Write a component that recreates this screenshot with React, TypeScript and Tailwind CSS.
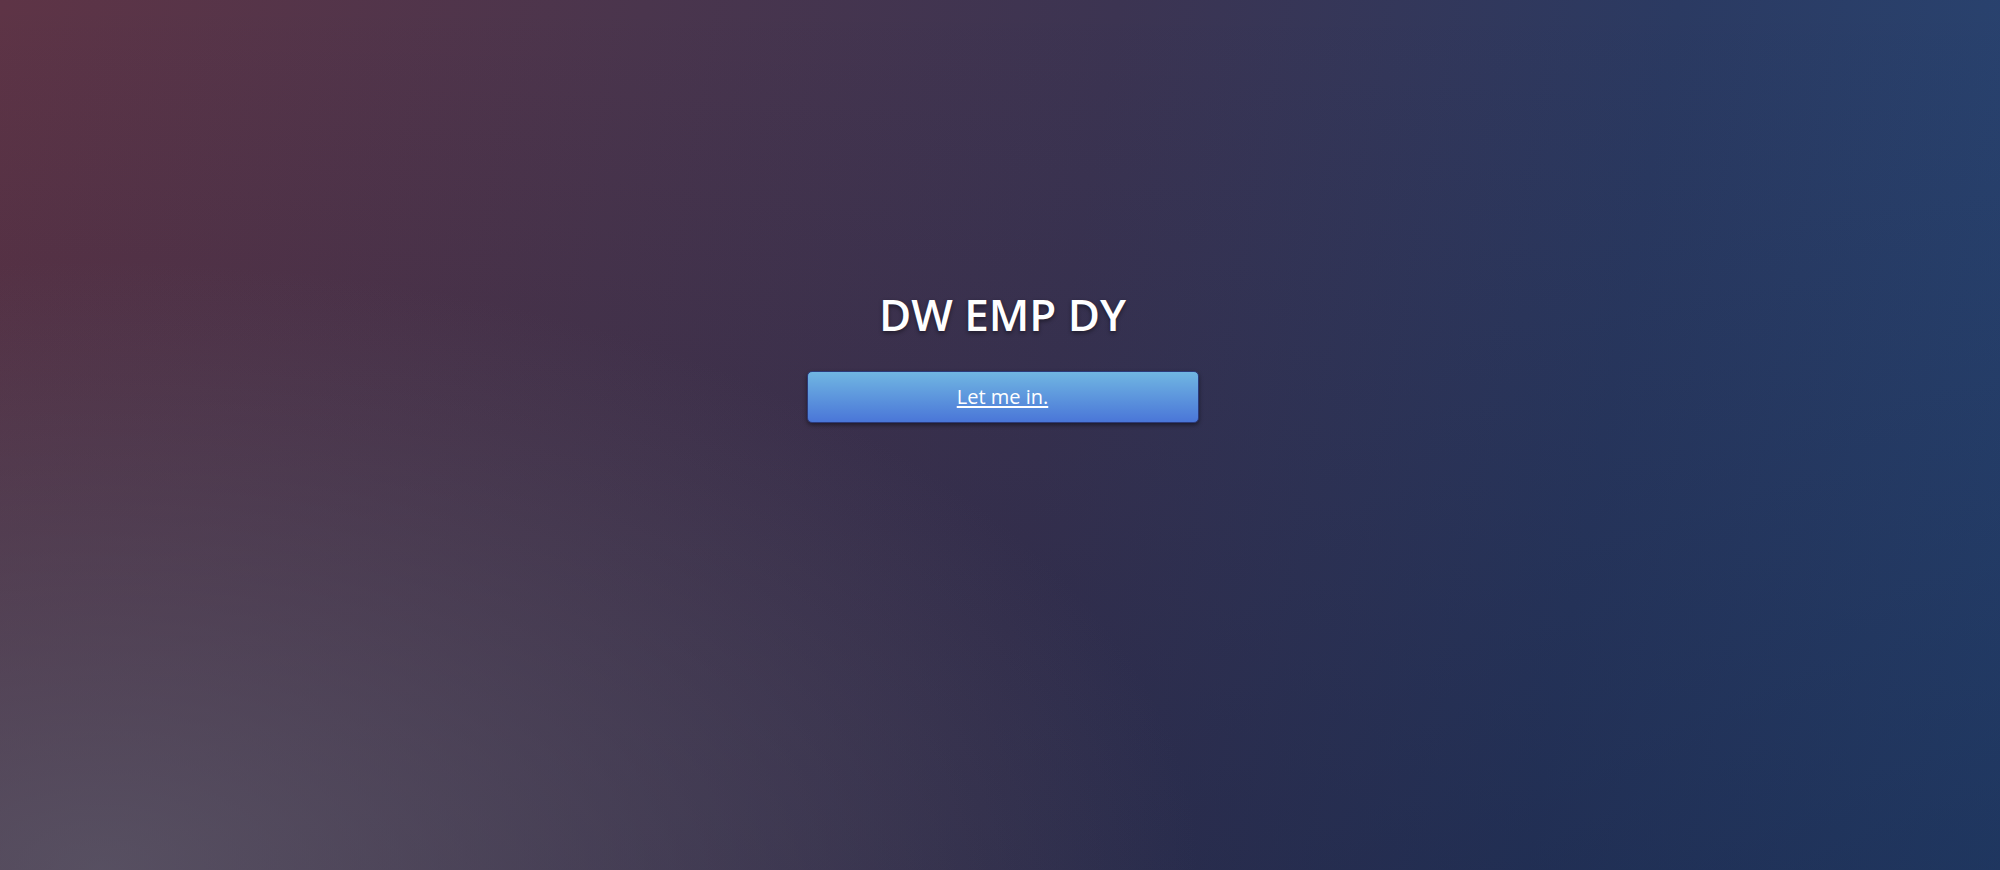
export default function App() {
  return (
    <div className="relative min-h-[870px] w-full overflow-hidden bg-[image:radial-gradient(ellipse_55%_70%_at_5%_100%,rgba(95,92,108,0.75),rgba(95,92,108,0)),linear-gradient(to_bottom,rgba(0,0,0,0)_0%,rgba(10,20,50,0.3)_100%),linear-gradient(100deg,#5e3446_0%,#4a354d_30%,#3c3452_52%,#2b3a62_78%,#284573_100%)] font-['Open_Sans','Noto_Sans',sans-serif]">
      <div className="flex flex-col items-center pl-[5px] pt-[285px]">
        <h1 className="text-[44px] leading-[58px] font-semibold text-white [text-shadow:0_2px_4px_rgba(0,0,0,0.45)]">
          DW EMP DY
        </h1>
        <a
          href="#"
          className="mt-[28px] flex h-[52px] w-[392px] items-center justify-center rounded-[5px] border border-[#2c3a7a] bg-[linear-gradient(to_bottom,#70b6e2,#4a76d8)] text-[20px] text-white underline underline-offset-2 shadow-[0_2px_4px_rgba(0,0,0,0.45)]"
        >
          Let me in.
        </a>
      </div>
    </div>
  );
}
